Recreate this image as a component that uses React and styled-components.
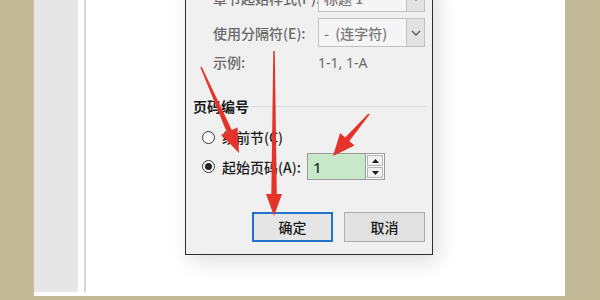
import React from 'react'
import styled, { createGlobalStyle } from 'styled-components'

const RED = '#e6332a'

const GlobalStyle = createGlobalStyle`
  html, body {
    margin: 0;
    padding: 0;
    background: #c3bb97;
  }
  * {
    box-sizing: border-box;
  }
`

const Screen = styled.div`
  position: relative;
  width: 600px;
  height: 300px;
  overflow: hidden;
  background: #c3bb97;
  font-family: "Noto Sans CJK SC", "Noto Sans", sans-serif;
  font-size: 14px;
`

const Workspace = styled.div`
  display: flex;
  margin-left: 34px;
  width: 531px;
  height: 296px;
  background: #ffffff;
`

const SidePanel = styled.div`
  width: 44px;
  height: 292px;
  background: #e6e6e6;
`

const Gutter = styled.div`
  width: 8px;
  height: 292px;
  border-left: 4px solid #ffffff;
  border-right: 2px solid #d6d6d6;
`

const Page = styled.div`
  flex: 1;
  display: flex;
  align-items: flex-end;
  height: 296px;
  padding: 0 0 41px 99px;
  overflow: hidden;
`

const Dialog = styled.div`
  width: 248px;
  display: flex;
  flex-direction: column;
  background: #f0f0f0;
  border: 1px solid #2e2e2e;
  border-top: none;
  padding-bottom: 12px;
  box-shadow: 5px 7px 20px rgba(0, 0, 0, 0.13);
  font-weight: 500;
`

const FieldGrid = styled.div`
  display: grid;
  grid-template-columns: 105px 107px;
  row-gap: 6px;
  padding-left: 27px;
  color: #6a6a6a;
`

const FieldLabel = styled.div`
  display: flex;
  align-items: center;
  height: ${({ h }) => h}px;
  margin-top: ${({ mt }) => mt || 0}px;
  white-space: nowrap;
`

const Select = styled.div`
  display: flex;
  height: 29px;
  background: #f5f5f5;
  border: 1px solid #c2c2c2;
`

const SelectText = styled.div`
  flex: 1;
  display: flex;
  align-items: center;
  padding-left: 5px;
  color: #7a7a7a;
  white-space: nowrap;
`

const SelectButton = styled.div`
  width: 18px;
  display: flex;
  align-items: center;
  justify-content: center;
  background: #e2e2e2;
  border-left: 1px solid #c2c2c2;
`

const Sample = styled.div`
  display: flex;
  align-items: center;
  height: 20px;
  margin-top: -1px;
  color: #6a6a6a;
  font-family: "Noto Sans", sans-serif;
  font-weight: 400;
`

const Group = styled.div`
  margin: 24px 5px 0 7px;
  color: #1c1c1c;
`

const GroupHeader = styled.div`
  display: flex;
  align-items: center;
  height: 20px;
  gap: 1px;

  &::after {
    content: '';
    flex: 1;
    height: 1px;
    background: #dadada;
  }
`

const GroupTitle = styled.span`
  font-weight: 600;
`

const RadioRow = styled.div`
  display: flex;
  align-items: center;
  height: ${({ h }) => h}px;
  margin-top: ${({ mt }) => mt}px;
  padding-left: 9px;
`

const Radio = styled.span`
  position: relative;
  width: 13px;
  height: 13px;
  border-radius: 50%;
  border: 1px solid #333333;
  background: #ffffff;
  margin-right: 7px;

  ${({ checked }) => checked && `
    &::after {
      content: '';
      position: absolute;
      left: 2px;
      top: 2px;
      width: 7px;
      height: 7px;
      border-radius: 50%;
      background: #262626;
    }
  `}
`

const RadioLabel = styled.span`
  width: ${({ w }) => w || 'auto'};
  white-space: nowrap;
`

const NumberInput = styled.div`
  display: flex;
  height: 27px;
`

const InputBox = styled.div`
  width: 58px;
  display: flex;
  align-items: center;
  padding-left: 5px;
  background: #c9e7c9;
  border: 1px solid #9a9a9a;
  border-right: none;
  font-family: "Noto Sans", sans-serif;
  font-size: 15px;
  color: #1a3a1a;
`

const Spinner = styled.div`
  width: 20px;
  display: flex;
  flex-direction: column;
  padding: 1px;
  gap: 1px;
  background: #ffffff;
  border: 1px solid #9a9a9a;
`

const SpinButton = styled.div`
  flex: 1;
  display: flex;
  align-items: center;
  justify-content: center;
  background: #f0f0f0;
  border: 1px solid #b4b4b4;
`

const ButtonRow = styled.div`
  display: flex;
  justify-content: flex-end;
  gap: 11px;
  margin-top: 32px;
  padding-right: 7px;
`

const Button = styled.div`
  width: 81px;
  height: 30px;
  display: flex;
  align-items: center;
  justify-content: center;
  color: #1a1a1a;
  background: ${({ primary }) => (primary ? '#e5e5e5' : '#e1e1e1')};
  border: ${({ primary }) => (primary ? '2px solid #1f74c9' : '1px solid #adadad')};
`

const Overlay = styled.svg`
  position: absolute;
  left: 0;
  top: 0;
  pointer-events: none;
`

function arrowPoints (x1, y1, x2, y2, headLen, headHalf, tailW, neckW) {
  const dx = x2 - x1
  const dy = y2 - y1
  const len = Math.hypot(dx, dy)
  const ux = dx / len
  const uy = dy / len
  const nx = -uy
  const ny = ux
  const bx = x2 - ux * headLen
  const by = y2 - uy * headLen
  const pts = [
    [x1 + nx * tailW / 2, y1 + ny * tailW / 2],
    [bx + nx * neckW / 2, by + ny * neckW / 2],
    [bx + nx * headHalf, by + ny * headHalf],
    [x2, y2],
    [bx - nx * headHalf, by - ny * headHalf],
    [bx - nx * neckW / 2, by - ny * neckW / 2],
    [x1 - nx * tailW / 2, y1 - ny * tailW / 2],
  ]
  return pts.map(([x, y]) => `${x.toFixed(1)},${y.toFixed(1)}`).join(' ')
}

const ARROWS = [
  [201, 67, 239, 153, 24, 9, 1.5, 5.5],
  [274, 51, 274, 216, 22, 8, 1.5, 5.5],
  [369, 114, 333, 156, 22, 9.5, 1.5, 5.5],
]

const Chevron = () => (
  <svg width="10" height="6" viewBox="0 0 10 6">
    <path d="M1 1 L5 5 L9 1" fill="none" stroke="#5a5a5a" strokeWidth="1.3" />
  </svg>
)

const Triangle = ({ up }) => (
  <svg width="7" height="4" viewBox="0 0 7 4">
    <path d={up ? 'M0 4 L3.5 0 L7 4 Z' : 'M0 0 L3.5 4 L7 0 Z'} fill="#1a1a1a" />
  </svg>
)

export default function App () {
  return (
    <Screen>
      <GlobalStyle />
      <Workspace>
        <SidePanel />
        <Gutter />
        <Page>
          <Dialog>
            <FieldGrid>
              <FieldLabel h={29}>章节起始样式(P):</FieldLabel>
              <Select>
                <SelectText>标题 1</SelectText>
                <SelectButton><Chevron /></SelectButton>
              </Select>
              <FieldLabel h={29}>使用分隔符(E):</FieldLabel>
              <Select>
                <SelectText>-&nbsp;&nbsp;(连字符)</SelectText>
                <SelectButton><Chevron /></SelectButton>
              </Select>
              <FieldLabel h={20} mt={-1}>示例:</FieldLabel>
              <Sample>1-1, 1-A</Sample>
            </FieldGrid>

            <Group>
              <GroupHeader>
                <GroupTitle>页码编号</GroupTitle>
              </GroupHeader>
              <RadioRow h={20} mt={11}>
                <Radio />
                <RadioLabel>续前节(C)</RadioLabel>
              </RadioRow>
              <RadioRow h={27} mt={6}>
                <Radio checked />
                <RadioLabel w="85px">起始页码(A):</RadioLabel>
                <NumberInput>
                  <InputBox>1</InputBox>
                  <Spinner>
                    <SpinButton><Triangle up /></SpinButton>
                    <SpinButton><Triangle /></SpinButton>
                  </Spinner>
                </NumberInput>
              </RadioRow>
            </Group>

            <ButtonRow>
              <Button primary>确定</Button>
              <Button>取消</Button>
            </ButtonRow>
          </Dialog>
        </Page>
      </Workspace>

      <Overlay width="600" height="300" viewBox="0 0 600 300">
        {ARROWS.map((a, i) => (
          <polygon key={i} points={arrowPoints(...a)} fill={RED} />
        ))}
      </Overlay>
    </Screen>
  )
}
